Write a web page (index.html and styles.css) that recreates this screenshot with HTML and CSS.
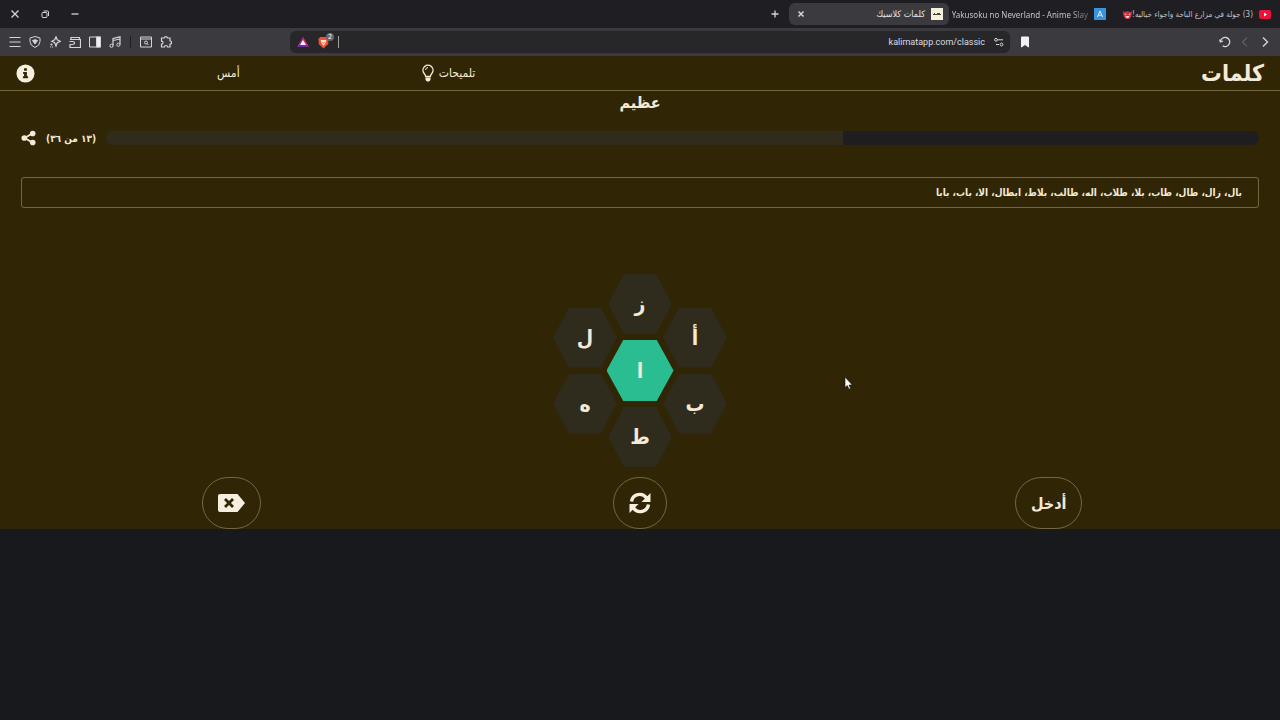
FILE: index.html
```html
<!DOCTYPE html>
<html lang="ar" dir="rtl">
<head>
<meta charset="UTF-8">
<title>كلمات كلاسيك</title>
<link rel="stylesheet" href="styles.css">
</head>
<body>

<!-- tabs -->
<div class="tab-strip">
  <div class="tab tab-video">
    <svg class="favicon" viewBox="0 0 12 12"><rect y="2" width="12" height="9" rx="2" fill="#f0113a"/><path d="M5 4.5v4l3-2z" fill="#fff"/></svg>
    <span class="tab-title">(3) جولة في مزارع الباحة واجواء خياليه!</span>
    <svg class="emoji" viewBox="0 0 10 10"><path d="M0 1l2 1.500Q5 .5 8 2.500L10 1 9.500 6Q8.500 10 5 10T.5 6z" fill="#c9344a"/><path d="M2 4l2 1-2 .5zM8 4L6 5l2 .5z" fill="#ffe08a"/><path d="M2.500 7h5L6 8.500H4z" fill="#fff"/></svg>
  </div>
  <div class="tab tab-anime">
    <svg class="favicon" viewBox="0 0 12 12"><rect width="12" height="12" fill="#3b93dc"/><path d="M3.500 9L6 3l2.500 6M4.500 7.200h3" fill="none" stroke="#d9efff"/></svg>
    <span class="tab-title" dir="ltr">Yakusoku no Neverland - Anime Slay</span>
  </div>
  <div class="tab tab-active">
    <svg class="favicon" viewBox="0 0 12 12"><rect width="12" height="12" fill="#f4f1dc"/><path d="M2 6.500h8M3 5.500h1M6 5.500h3" stroke="#4a4636"/></svg>
    <span class="tab-title">كلمات كلاسيك</span>
    <button class="icon-btn tab-close" aria-label="إغلاق"><svg viewBox="0 0 12 12"><path d="M3.500 3.500l5 5m0-5l-5 5" stroke-width="1.500"/></svg></button>
  </div>
  <button class="icon-btn tab-new" aria-label="تبويب جديد"><svg viewBox="0 0 12 12"><path d="M6 2.500v7M2.500 6h7" stroke-width="1.300"/></svg></button>
  <div class="window-controls">
    <button class="icon-btn" aria-label="إغلاق النافذة"><svg viewBox="0 0 12 12"><path d="M2.500 2.500l7 7m0-7l-7 7" stroke-width="1.300"/></svg></button>
    <button class="icon-btn" aria-label="استعادة"><svg viewBox="0 0 12 12"><rect x="3" y="4.500" width="5" height="5" rx="1"/><path d="M4.500 3h4q1 0 1 1v4"/></svg></button>
    <button class="icon-btn" aria-label="تصغير"><svg viewBox="0 0 12 12"><path d="M2.500 6h7" stroke-width="1.300"/></svg></button>
  </div>
</div>

<!-- address bar -->
<div class="toolbar">
  <div class="toolbar-nav">
    <button class="icon-btn" aria-label="رجوع"><svg viewBox="0 0 12 12"><path d="M4 1.500L8.500 6 4 10.500" stroke-width="1.400"/></svg></button>
    <button class="icon-btn dim" aria-label="تقدم"><svg viewBox="0 0 12 12"><path d="M8 1.500L3.500 6 8 10.500"/></svg></button>
    <button class="icon-btn" aria-label="تحديث"><svg viewBox="0 0 12 12"><path d="M1.500 5.500a4.600 4.600 0 1 1 2.200 4.400M.5 3.500l1 2.500 2.500-1" stroke-width="1.300"/></svg></button>
    <button class="icon-btn bookmark" aria-label="إشارة مرجعية"><svg viewBox="0 0 12 12"><path d="M2.500 1h7v10L6 8.500 2.500 11z" fill="#f2f2f4" stroke="#f2f2f4"/></svg></button>
  </div>
  <div class="address">
    <svg class="icon" viewBox="0 0 12 12"><path d="M4.500 3.800h5.500M3 8.500h3"/><circle cx="3" cy="3.800" r="1.400"/><circle cx="8.500" cy="8.500" r="1.400"/></svg>
    <input class="address-input" type="text" dir="ltr" value="kalimatapp.com/classic" aria-label="العنوان">
    <span class="address-line"></span>
    <span class="shield">
      <svg viewBox="0 0 14 14"><path d="M3.500 1h7l2 2-.5 6L7 13.500 2 9 1.500 3z" fill="#f0502b"/><path d="M4 4l2 .5h2l2-.5-.5 3L7 10.500 4.500 7z" fill="#fff"/><path d="M5.500 6L7 8l1.500-2" fill="none" stroke="#f0502b"/></svg>
      <span class="shield-count">2</span>
    </span>
    <svg class="rewards" viewBox="0 0 12 12"><path d="M6 1L0 11h12z" fill="#6b2aa8"/><path d="M6 1l6 10L9 9 6 4z" fill="#e0284f"/><path d="M6 1L0 11l3-2 3-5z" fill="#b31f8f"/><path d="M6 4L3 9h6z" fill="#fff"/></svg>
  </div>
  <div class="toolbar-tools">
    <button class="icon-btn" aria-label="القائمة"><svg viewBox="0 0 12 12"><path d="M.5 1.500h11M.5 6h11M.5 10.500h11"/></svg></button>
    <button class="icon-btn" aria-label="VPN"><svg viewBox="0 0 12 12"><path d="M6 .5l5 1.500v3.500Q11 9.500 6 11.500 1 9.500 1 5.500V2z"/><path d="M3.500 4.500q2.500-1.500 5 0L6 8z" fill="#d5d5d8"/></svg></button>
    <button class="icon-btn" aria-label="Leo"><svg viewBox="0 0 12 12"><path d="M7 .8l1.200 2.900 3.100 1.600-3.100 1.500L7 10 5.700 6.800 2.800 5.300l2.900-1.600z" stroke-width="1.200"/><path d="M2.500 7.500v2M1.500 8.500h2M3.500 10.500v1M1 10.800h.8" stroke-width="1.200"/></svg></button>
    <button class="icon-btn" aria-label="المحفظة"><svg viewBox="0 0 12 12"><path d="M2 3V1.500h8.500V3M1 3.500h10.500v8H1V9M.5 5.500h3q2 0 2 1.500t-2 1.500h-3" stroke-width="1.200"/></svg></button>
    <button class="icon-btn" aria-label="الشريط الجانبي"><svg viewBox="0 0 12 12"><path d="M.5 1h11v10H.5z"/><path d="M7.500 1h4v10h-4z" fill="#f0f0f2"/></svg></button>
    <button class="icon-btn" aria-label="قائمة التشغيل"><svg viewBox="0 0 12 12"><path d="M4 9.500V2.500L11 .8V8.500M4 4.500l7-1.500" stroke-width="1.200"/><circle cx="2.500" cy="9.800" r="1.600"/><circle cx="9.400" cy="8.700" r="1.600"/></svg></button>
    <span class="tools-divider"></span>
    <button class="icon-btn" aria-label="بحث في الصفحة"><svg viewBox="0 0 12 12"><path d="M.5 1h11v10H.5zM.5 3h11"/><circle cx="6" cy="6.500" r="1.500"/><path d="M7 7.500L8.500 9"/></svg></button>
    <button class="icon-btn" aria-label="الإضافات"><svg viewBox="0 0 12 12"><path d="M1.500 2h2.700a1.700 1.700 0 0 1 3.300 0H10v3a1.600 1.600 0 0 1 0 3.200V11H7.500a1.500 1.500 0 0 0-3 0h-3V8.200a1.500 1.500 0 0 0 0-3z" stroke-width="1.200"/></svg></button>
  </div>
</div>

<!-- game -->
<main class="game">
  <header class="header">
    <h1 class="logo">كلمات</h1>
    <nav class="menu">
      <button class="menu-item">
        تلميحات
        <svg class="bulb" viewBox="0 0 12 18"><path d="M3.700 12.500Q3.500 11 2 9.200a5 5 0 1 1 8 0Q8.500 11 8.300 12.500z" fill="none" stroke="#f3ead7" stroke-width="1.400"/><path d="M3.500 6q.2-2.200 2.500-2.500" fill="none" stroke="#f3ead7"/><path d="M3.500 13.500h5V16L7 17.500H5L3.500 16z" fill="#f3ead7"/></svg>
      </button>
      <button class="menu-item">أمس</button>
      <button class="menu-item" aria-label="معلومات">
        <svg class="info" viewBox="0 0 20 20"><circle cx="10" cy="10" r="9.500" fill="#f6efe0"/><path d="M8.500 4.500h3v2.700h-3zM7.500 8.500h4V13h1.200v2H7.300v-2h1.200v-2.500h-1z" fill="#302605"/></svg>
      </button>
    </nav>
  </header>

  <h2 class="rank">عظيم</h2>

  <div class="progress-row">
    <div class="progress" role="progressbar" aria-valuenow="13" aria-valuemax="36" aria-label="الكلمات">
      <div class="progress-fill" style="width: 36.100%"></div>
    </div>
    <span class="progress-count">(١٣ من ٣٦)</span>
    <button class="share" aria-label="مشاركة">
      <svg viewBox="0 0 16 16"><path d="M12.500 3L4 8l8.500 5" fill="none" stroke="#f3ead7" stroke-width="2"/><g fill="#f3ead7"><circle cx="12.500" cy="3.200" r="3"/><circle cx="3.500" cy="8" r="3"/><circle cx="12.500" cy="12.800" r="3"/></g></svg>
    </button>
  </div>

  <p class="found">بال، زال، طال، طاب، بلا، طلاب، اله، طالب، بلاط، ابطال، الا، باب، بابا</p>

  <div class="hive">
    <div class="hive-col">
      <button class="hex">أ</button>
      <button class="hex">ب</button>
    </div>
    <div class="hive-col">
      <button class="hex">ز</button>
      <button class="hex hex-center">ا</button>
      <button class="hex">ط</button>
    </div>
    <div class="hive-col">
      <button class="hex">ل</button>
      <button class="hex">ه</button>
    </div>
  </div>

  <div class="actions">
    <button class="action">أدخل</button>
    <button class="action" aria-label="خلط">
      <svg class="shuffle" viewBox="0 0 22 22"><path d="M2.500 9.500a8.300 8.300 0 0 1 15-3.500M19.500 12.500a8.300 8.300 0 0 1-15 3.500" fill="none" stroke="#f6efe0" stroke-width="3.400"/><path d="M21.500 1v9h-9zM.5 21v-9h9z" fill="#f6efe0"/></svg>
    </button>
    <button class="action" aria-label="حذف">
      <svg class="delete" viewBox="0 0 27 18"><path d="M2 0h17.500L27 9l-7.500 9H2q-2 0-2-2V2q0-2 2-2z" fill="#f6efe0"/><path d="M7 5l8 8m0-8l-8 8" stroke="#302605" stroke-width="2.800"/></svg>
    </button>
  </div>
</main>

<svg class="pointer" viewBox="0 0 9 14"><path d="M1 1v10.500l2.300-2 1.700 3.700 1.600-.8L5 9h3.300z" fill="#fff" stroke="#111" stroke-width=".6"/></svg>

</body>
</html>
```
FILE: styles.css
```css
* {
  box-sizing: border-box;
}

body {
  margin: 0;
  min-height: 100vh;
  background-color: #18191c;
  color: #f3ead7;
  font-family: "DejaVu Sans Condensed", "DejaVu Sans", sans-serif;
  font-size: 12px;
}

button {
  padding: 0;
  border: none;
  background: none;
  color: inherit;
  font: inherit;
  cursor: pointer;
}

svg {
  display: block;
}

/* --- browser bars --- */
.tab-strip {
  display: flex;
  align-items: center;
  height: 28px;
  padding: 0 9px;
  background-color: #1f1e23;
  color: #c4c4c8;
  font-size: 9px;
}

.tab {
  display: flex;
  align-items: center;
  gap: 6px;
  height: 22px;
}

.tab-title {
  white-space: nowrap;
}

.favicon {
  flex: none;
  width: 12px;
  height: 12px;
}

.emoji {
  flex: none;
  width: 9px;
  height: 9px;
}

.tab-video {
  width: 165px;
  gap: 0;
}

.tab-video .favicon {
  margin-left: 6px;
}

.tab-video .tab-title {
  font-size: 8px;
}

.tab-anime {
  width: 149px;
}

/* long titles fade out at the end */
.tab-anime .tab-title {
  flex: 1;
  font-family: "Noto Sans", sans-serif;
  font-size: 8px;
  -webkit-mask-image: linear-gradient(to left, rgba(0, 0, 0, 0.4), #000 20px);
  mask-image: linear-gradient(to left, rgba(0, 0, 0, 0.4), #000 20px);
}

.tab-active {
  width: 160px;
  margin-right: 8px;
  padding: 0 6px;
  border-radius: 6px;
  background-color: #3b3a3f;
  color: #e4e4e7;
}

.tab-close {
  margin-right: auto;
}

.tab-new {
  margin-right: 8px;
}

.window-controls {
  display: flex;
  gap: 18px;
  margin-right: auto;
  direction: ltr;
}

.icon-btn svg,
.icon {
  width: 12px;
  height: 12px;
  fill: none;
  stroke: #d5d5d8;
  stroke-width: 1;
}

.dim {
  opacity: 0.4;
}

.toolbar {
  display: grid;
  grid-template-columns: 270px 1fr 290px;
  align-items: center;
  height: 28px;
  background-color: #3b3a3e;
}

.toolbar-nav {
  display: flex;
  gap: 8px;
  padding: 0 9px;
}

.bookmark {
  margin-right: auto;
}

.address {
  display: flex;
  align-items: center;
  gap: 8px;
  height: 22px;
  padding: 0 5px 0 7px;
  border-radius: 6px;
  background-color: #27272a;
}

.address-input {
  flex: 1;
  min-width: 0;
  padding: 0;
  border: none;
  outline: none;
  background: none;
  color: #dcdce0;
  font-family: Roboto, "Noto Sans", sans-serif;
  font-size: 9px;
  text-align: right;
}

.address-line {
  width: 1px;
  height: 12px;
  background-color: #a0a0a4;
}

.shield {
  position: relative;
}

.shield svg {
  width: 13px;
  height: 13px;
}

.shield-count {
  position: absolute;
  top: -3px;
  right: -4px;
  width: 8px;
  height: 8px;
  border-radius: 50%;
  background-color: #66666c;
  color: #fff;
  font-size: 7px;
  line-height: 8px;
  text-align: center;
}

.rewards {
  width: 12px;
  height: 12px;
}

.toolbar-tools {
  display: flex;
  align-items: center;
  gap: 8px;
  padding: 0 9px;
  direction: ltr;
}

.tools-divider {
  width: 1px;
  height: 12px;
  margin: 0 1px;
  background-color: #1f1e23;
}

/* --- game --- */
.game {
  background-color: #302605;
}

.header {
  display: flex;
  align-items: center;
  justify-content: space-between;
  height: 35px;
  padding: 0 16px;
  border-bottom: 1px solid #75683f;
}

.logo {
  margin: 0;
  font-size: 23px;
  line-height: 32px;
}

.menu {
  display: flex;
  align-items: center;
  justify-content: space-between;
  width: 36.800%;
}

.menu-item {
  display: flex;
  align-items: center;
  gap: 5px;
}

.bulb {
  width: 12px;
  height: 18px;
}

.info {
  width: 19px;
  height: 19px;
}

.rank {
  margin: 0;
  font-size: 16px;
  line-height: 24px;
  text-align: center;
}

.progress-row {
  display: flex;
  align-items: center;
  gap: 10px;
  height: 20px;
  margin-top: 13px;
  padding: 0 21px;
}

.progress {
  flex: 1;
  height: 14px;
  border-radius: 7px;
  overflow: hidden;
  background-color: #302b1a;
}

.progress-fill {
  height: 100%;
  background-color: #1e1e20;
}

.progress-count {
  font-size: 10px;
  font-weight: bold;
}

.share svg {
  width: 15px;
  height: 16px;
}

.found {
  margin: 29px 21px 0;
  padding: 0 16px;
  border: 1px solid #75683f;
  border-radius: 3px;
  font-size: 10px;
  font-weight: bold;
  line-height: 29px;
}

.hive {
  display: flex;
  align-items: center;
  justify-content: center;
  margin-top: 66px;
}

.hive-col {
  display: flex;
  flex-direction: column;
  align-items: center;
  gap: 6px;
  width: 55px;
}

.hex {
  flex: none;
  width: 64px;
  height: 60px;
  clip-path: polygon(25% 0, 75% 0, 100% 50%, 75% 100%, 25% 100%, 0 50%);
  background-color: #2f2b1d;
  font-size: 21px;
  font-weight: bold;
}

.hex-center {
  width: 67px;
  height: 61px;
  background-color: #2bbd92;
}

.actions {
  display: grid;
  grid-template-columns: repeat(3, 1fr);
  justify-items: center;
  margin-top: 10px;
  padding: 0 27px;
}

.action {
  display: flex;
  align-items: center;
  height: 52px;
  padding: 0 15px;
  border: 1px solid #75683f;
  border-radius: 26px;
  font-size: 16px;
  font-weight: bold;
}

.shuffle {
  width: 22px;
  height: 22px;
}

.delete {
  width: 27px;
  height: 18px;
}

.pointer {
  position: absolute;
  top: 376px;
  left: 844px;
  width: 9px;
  height: 14px;
}
```
